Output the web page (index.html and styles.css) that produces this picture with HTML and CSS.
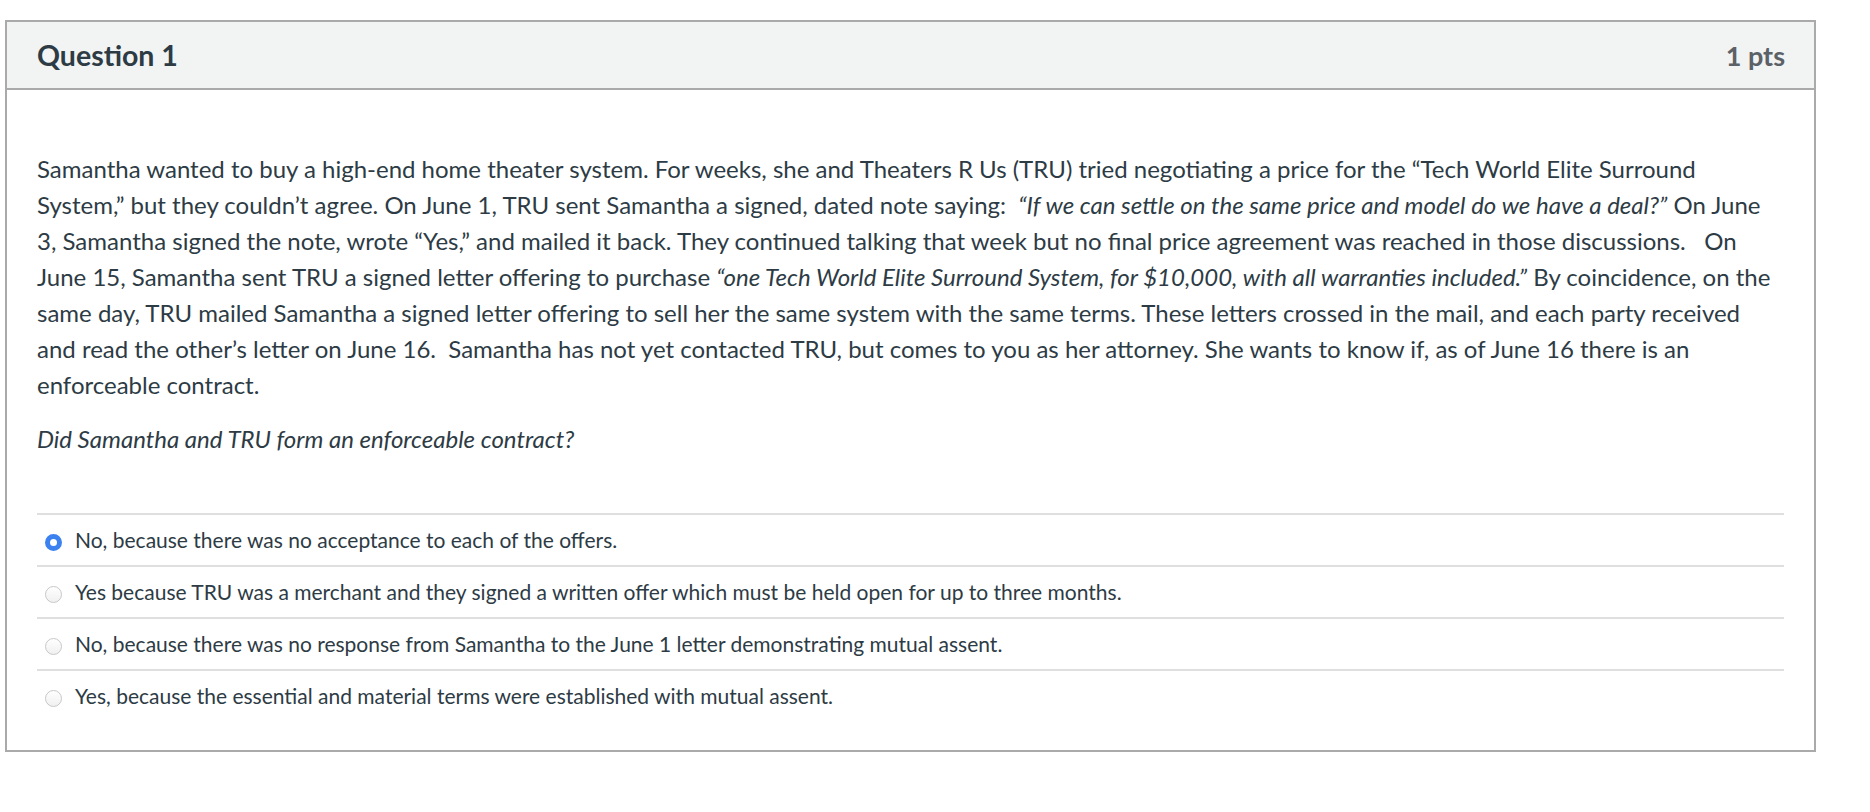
FILE: index.html
```html
<!DOCTYPE html>
<html lang="en">
<head>
<meta charset="utf-8">
<title>Question 1</title>
<link rel="stylesheet" href="styles.css">
</head>
<body>
<div class="question">
  <div class="q-header">
    <span class="q-title">Question 1</span>
    <span class="q-points">1 pts</span>
  </div>
  <div class="q-body">
    <p class="q-text">Samantha wanted to buy a high-end home theater system. For weeks, she and Theaters R Us (TRU) tried negotiating a price for the “Tech World Elite Surround System,” but they couldn’t agree. On June 1, TRU sent Samantha a signed, dated note saying:&nbsp; <em>“If we can settle on the same price and model do we have a deal?”</em> On June 3, Samantha signed the note, wrote “Yes,” and mailed it back. They continued talking that week but no final price agreement was reached in those discussions. &nbsp; On June 15, Samantha sent TRU a signed letter offering to purchase <em>“one Tech World Elite Surround System, for $10,000, with all warranties included.”</em> By coincidence, on the same day, TRU mailed Samantha a signed letter offering to sell her the same system with the same terms. These letters crossed in the mail, and each party received and read the other’s letter on June 16.&nbsp; Samantha has not yet contacted TRU, but comes to you as her attorney. She wants to know if, as of June 16 there is an enforceable contract.</p>
    <p class="q-text"><em>Did Samantha and TRU form an enforceable contract?</em></p>
    <div class="answers">
      <div class="answer"><span class="radio checked"></span><span class="answer-label">No, because there was no acceptance to each of the offers.</span></div>
      <div class="answer"><span class="radio"></span><span class="answer-label">Yes because TRU was a merchant and they signed a written offer which must be held open for up to three months.</span></div>
      <div class="answer"><span class="radio"></span><span class="answer-label">No, because there was no response from Samantha to the June 1 letter demonstrating mutual assent.</span></div>
      <div class="answer"><span class="radio"></span><span class="answer-label">Yes, because the essential and material terms were established with mutual assent.</span></div>
    </div>
  </div>
</div>
</body>
</html>
```

FILE: styles.css
```css
html, body {
  margin: 0;
  padding: 0;
  background: #ffffff;
}

body {
  font-family: Lato, "Noto Sans", "Liberation Sans", sans-serif;
  color: #2d3b45;
}

.question {
  margin: 20px 0 0 5px;
  width: 1811px;
  box-sizing: border-box;
  border: 2px solid #aaaaaa;
  background: #ffffff;
}

.q-header {
  display: flex;
  justify-content: space-between;
  align-items: center;
  height: 66px;
  padding: 0 29px 0 30px;
  background: #f2f3f3;
  border-bottom: 2px solid #aaaaaa;
}

.q-title {
  font-size: 28.5px;
  font-weight: 700;
  color: #2d3b45;
}

.q-points {
  font-size: 27px;
  font-weight: 700;
  color: #5b6166;
}

.q-body {
  padding: 61px 30px 29px 30px;
}

.q-text {
  margin: 0 0 18px 0;
  font-size: 24px;
  line-height: 36px;
  color: #2d3b45;
}

.q-text em {
  font-style: italic;
}

.answers {
  margin-top: 56px;
}

.answer {
  display: flex;
  align-items: center;
  height: 50px;
  border-top: 2px solid #dfdfdf;
  font-size: 21px;
  color: #2d3b45;
}

.radio {
  flex: none;
  width: 17px;
  height: 17px;
  margin: 4px 13px 0 8px;
  box-sizing: border-box;
  border-radius: 50%;
  border: 1px solid #c8c8c8;
  background: linear-gradient(#ffffff, #f0f0f0);
}

.radio.checked {
  border: 5px solid #3b82f0;
  background: #ffffff;
}

.answer-label {
  line-height: 26px;
}
```
